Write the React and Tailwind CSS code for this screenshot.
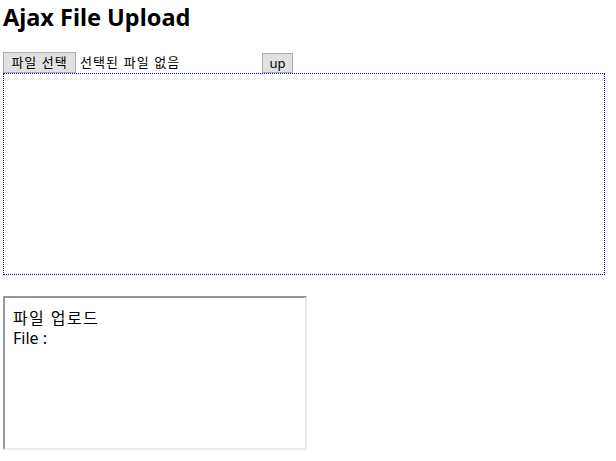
const App = () => {
  return (
    <div
      className="px-[3px] pt-[3px] text-black bg-white min-h-[461px]"
      style={{ fontFamily: '"Noto Sans", "Noto Sans CJK KR", sans-serif' }}
    >
      <h2 className="text-[23.5px] font-bold leading-[28px] m-0">Ajax File Upload</h2>

      <div className="mt-[21px] flex items-end h-[21px] text-[13px]">
        <div className="flex items-center w-[255px]">
          <button className="h-[21px] w-[73px] bg-[#e1e1e1] border border-[#adadad] text-[13px] tracking-[1px] leading-[19px] text-black">
            파일 선택
          </button>
          <span className="ml-[4px] leading-[19px] tracking-[1.1px]">선택된 파일 없음</span>
        </div>
        <button className="ml-[4px] h-[20px] w-[31px] bg-[#e1e1e1] border border-[#adadad] text-[13px] leading-[18px] text-black">
          up
        </button>
      </div>

      <div className="w-[602px] h-[202px] border border-dotted border-[#0000ee]" />

      <div className="mt-[21px] w-[304px] h-[154px] border-2 border-t-[#999999] border-l-[#999999] border-b-[#ebebeb] border-r-[#ebebeb] px-[8px] pt-[10px]">
        <div className="text-[16px] leading-[20px] tracking-[1.4px]">파일 업로드</div>
        <div className="text-[16px] leading-[20px]">File :</div>
      </div>
    </div>
  );
};

export default App;
